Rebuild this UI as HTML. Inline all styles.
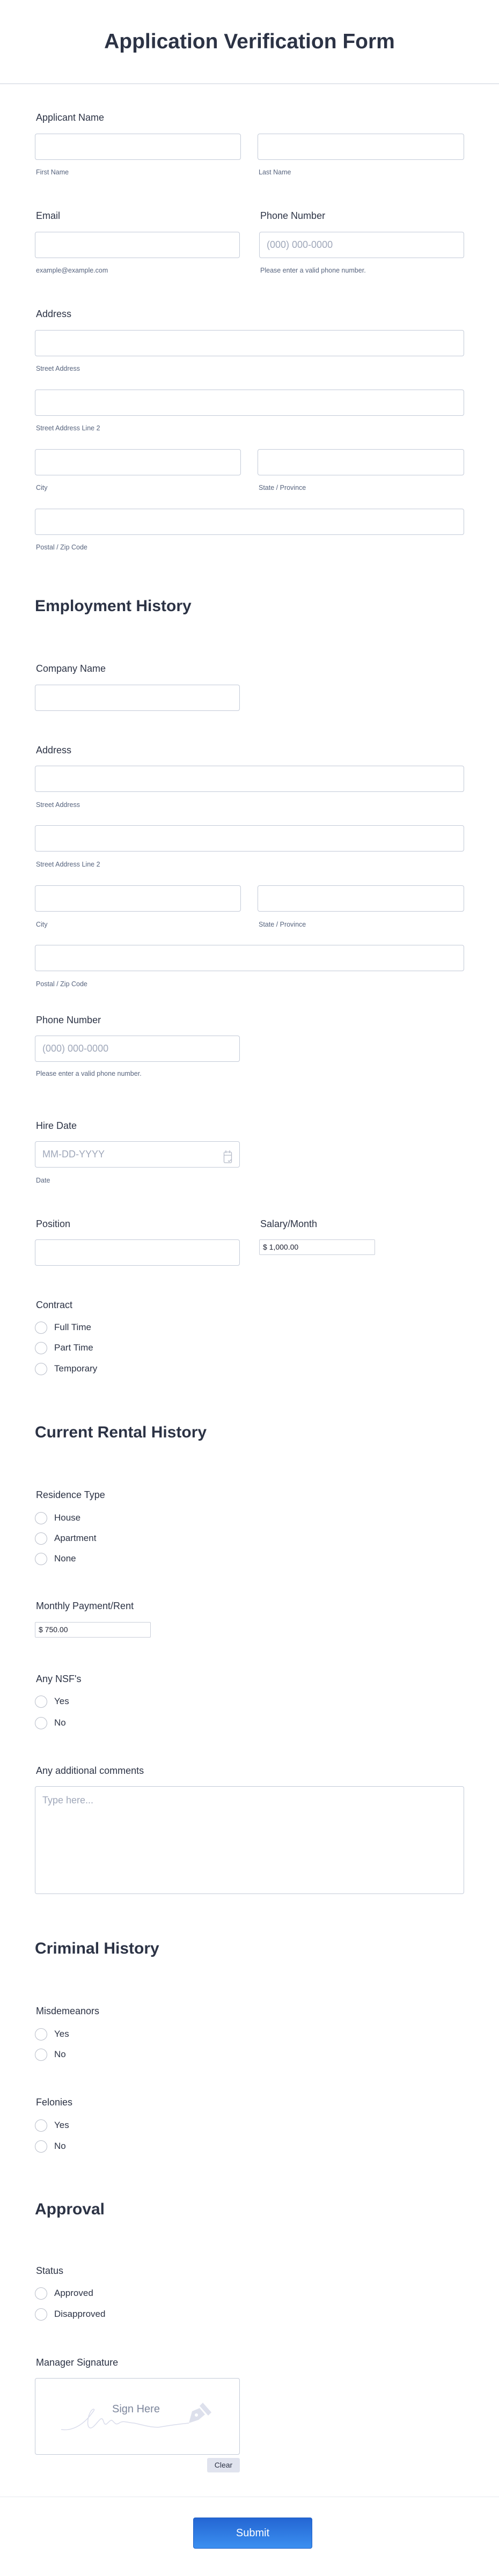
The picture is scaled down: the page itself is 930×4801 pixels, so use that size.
<!DOCTYPE html>
<html><head><meta charset="utf-8">
<style>
*{margin:0;padding:0;box-sizing:border-box}
body{width:930px;height:4801px;position:relative;background:#fff;font-family:"Liberation Sans",Arial,sans-serif;color:#2c3345;overflow:hidden}
.a{position:absolute;white-space:nowrap}
.t{position:absolute;left:0;width:930px;text-align:center;top:55px;font-size:39px;font-weight:bold;line-height:46px;color:#2c3345}
.h{position:absolute;left:65px;font-size:30px;font-weight:bold;line-height:36px;color:#2c3345}
.l{position:absolute;left:67px;font-size:18px;line-height:24px;color:#2c3345}
.s{position:absolute;font-size:12.5px;line-height:16px;color:#57647e}
.i{position:absolute;height:49px;border:1px solid #c3cad8;border-radius:4px;background:#fff}
.r{position:absolute;left:65px;width:23px;height:23px;border:1px solid #b8bdc9;border-radius:50%}
.rt{position:absolute;left:101px;font-size:17px;line-height:22px;color:#2c3345}
.m{position:absolute;height:29px;border:1px solid #c9ced9;border-radius:2px;font-size:14px;line-height:27px;padding-left:6px;color:#1c2030;background:#fff}
.ph{color:#a0a8ba;font-size:18px}
</style></head><body>
<div class="t">Application Verification Form</div>
<div class="a" style="left:0;top:155px;width:930px;height:2px;background:#e3e6ec"></div>

<div class="l" style="top:207px">Applicant Name</div>
<div class="i" style="left:65px;top:249px;width:384px"></div>
<div class="i" style="left:480px;top:249px;width:385px"></div>
<div class="s" style="left:67px;top:313px">First Name</div>
<div class="s" style="left:482px;top:313px">Last Name</div>

<div class="l" style="top:390px">Email</div>
<div class="l" style="top:390px;left:485px">Phone Number</div>
<div class="i" style="left:65px;top:432px;width:382px"></div>
<div class="i" style="left:483px;top:432px;width:382px;padding-left:13px;line-height:47px"><span class="ph">(000) 000-0000</span></div>
<div class="s" style="left:67px;top:496px">example@example.com</div>
<div class="s" style="left:485px;top:496px">Please enter a valid phone number.</div>

<div class="l" style="top:573px">Address</div>
<div class="i" style="left:65px;top:615px;width:800px"></div>
<div class="s" style="left:67px;top:679px">Street Address</div>
<div class="i" style="left:65px;top:726px;width:800px"></div>
<div class="s" style="left:67px;top:790px">Street Address Line 2</div>
<div class="i" style="left:65px;top:837px;width:384px"></div>
<div class="i" style="left:480px;top:837px;width:385px"></div>
<div class="s" style="left:67px;top:901px">City</div>
<div class="s" style="left:482px;top:901px">State / Province</div>
<div class="i" style="left:65px;top:948px;width:800px"></div>
<div class="s" style="left:67px;top:1012px">Postal / Zip Code</div>

<div class="h" style="top:1112px">Employment History</div>
<div class="l" style="top:1234px">Company Name</div>
<div class="i" style="left:65px;top:1276px;width:382px"></div>

<div class="l" style="top:1386px">Address</div>
<div class="i" style="left:65px;top:1427px;width:800px"></div>
<div class="s" style="left:67px;top:1492px">Street Address</div>
<div class="i" style="left:65px;top:1538px;width:800px"></div>
<div class="s" style="left:67px;top:1603px">Street Address Line 2</div>
<div class="i" style="left:65px;top:1650px;width:384px"></div>
<div class="i" style="left:480px;top:1650px;width:385px"></div>
<div class="s" style="left:67px;top:1715px">City</div>
<div class="s" style="left:482px;top:1715px">State / Province</div>
<div class="i" style="left:65px;top:1761px;width:800px"></div>
<div class="s" style="left:67px;top:1826px">Postal / Zip Code</div>

<div class="l" style="top:1889px">Phone Number</div>
<div class="i" style="left:65px;top:1930px;width:382px;padding-left:13px;line-height:47px"><span class="ph">(000) 000-0000</span></div>
<div class="s" style="left:67px;top:1993px">Please enter a valid phone number.</div>

<div class="l" style="top:2086px">Hire Date</div>
<div class="i" style="left:65px;top:2127px;width:382px;padding-left:13px;line-height:47px"><span class="ph">MM-DD-YYYY</span></div>
<svg class="a" style="left:416px;top:2142px" width="18" height="28" viewBox="0 0 18 28" fill="none" stroke="#b4bac8" stroke-width="1.3"><rect x="1.5" y="5" width="14" height="20" rx="2"/><path d="M1.5 11h14M5 2v5M12 2v5M9 21l2 2 4-4"/></svg>
<div class="s" style="left:67px;top:2192px">Date</div>

<div class="l" style="top:2269px">Position</div>
<div class="l" style="top:2269px;left:485px">Salary/Month</div>
<div class="i" style="left:65px;top:2310px;width:382px"></div>
<div class="m" style="left:483px;top:2310px;width:216px">$ 1,000.00</div>

<div class="l" style="top:2420px">Contract</div>
<div class="r" style="top:2463px"></div><div class="rt" style="top:2463px">Full Time</div>
<div class="r" style="top:2501px"></div><div class="rt" style="top:2501px">Part Time</div>
<div class="r" style="top:2540px"></div><div class="rt" style="top:2540px">Temporary</div>

<div class="h" style="top:2652px">Current Rental History</div>
<div class="l" style="top:2774px">Residence Type</div>
<div class="r" style="top:2818px"></div><div class="rt" style="top:2818px">House</div>
<div class="r" style="top:2856px"></div><div class="rt" style="top:2856px">Apartment</div>
<div class="r" style="top:2894px"></div><div class="rt" style="top:2894px">None</div>

<div class="l" style="top:2981px">Monthly Payment/Rent</div>
<div class="m" style="left:65px;top:3023px;width:216px">$ 750.00</div>

<div class="l" style="top:3117px">Any NSF's</div>
<div class="r" style="top:3160px"></div><div class="rt" style="top:3160px">Yes</div>
<div class="r" style="top:3200px"></div><div class="rt" style="top:3200px">No</div>

<div class="l" style="top:3288px">Any additional comments</div>
<div class="i" style="left:65px;top:3329px;width:800px;height:201px;padding:14px 0 0 13px;line-height:22px"><span class="ph">Type here...</span></div>

<div class="h" style="top:3614px">Criminal History</div>
<div class="l" style="top:3736px">Misdemeanors</div>
<div class="r" style="top:3780px"></div><div class="rt" style="top:3780px">Yes</div>
<div class="r" style="top:3818px"></div><div class="rt" style="top:3818px">No</div>
<div class="l" style="top:3906px">Felonies</div>
<div class="r" style="top:3950px"></div><div class="rt" style="top:3950px">Yes</div>
<div class="r" style="top:3989px"></div><div class="rt" style="top:3989px">No</div>

<div class="h" style="top:4100px">Approval</div>
<div class="l" style="top:4220px">Status</div>
<div class="r" style="top:4263px"></div><div class="rt" style="top:4263px">Approved</div>
<div class="r" style="top:4302px"></div><div class="rt" style="top:4302px">Disapproved</div>

<div class="l" style="top:4391px">Manager Signature</div>
<div class="i" style="left:65px;top:4432px;width:382px;height:143px"></div>
<div class="a" style="left:209px;top:4478px;font-size:20px;line-height:24px;color:#7d869c">Sign Here</div>
<svg class="a" style="left:100px;top:4460px" width="300" height="90" viewBox="0 0 300 90" fill="none">
<path d="M14 68C40 72 60 52 68 42C74 34 78 30 74 30C66 32 60 58 66 64C72 70 82 52 88 48C94 46 92 60 98 58C104 54 106 48 110 52C114 56 116 60 122 56C130 50 140 56 150 56C168 60 188 66 200 63C218 60 232 58 252 56" stroke="#d9dceb" stroke-width="1.5"/>
<path d="M252 56L258 34L272 28L282 40L270 50Z" fill="#dde0ec"/>
<path d="M272 24L278 18L294 36L288 42Z" fill="#dde0ec"/>
<circle cx="266" cy="41" r="3" fill="#fff"/>
</svg>
<div class="a" style="left:386px;top:4581px;width:61px;height:27px;background:#e0e3ee;border-radius:3px;font-size:14px;line-height:27px;text-align:center;color:#2c3345">Clear</div>

<div class="a" style="left:0;top:4653px;width:930px;height:148px;background:#fff;border-top:1px solid #e6e9f0"></div>
<div class="a" style="left:360px;top:4692px;width:222px;height:58px;border-radius:4px;background:linear-gradient(#2466d3,#3b8ff0);border:1px solid #1f5fc4;color:#fff;font-size:20px;line-height:56px;text-align:center">Submit</div>
</body></html>
